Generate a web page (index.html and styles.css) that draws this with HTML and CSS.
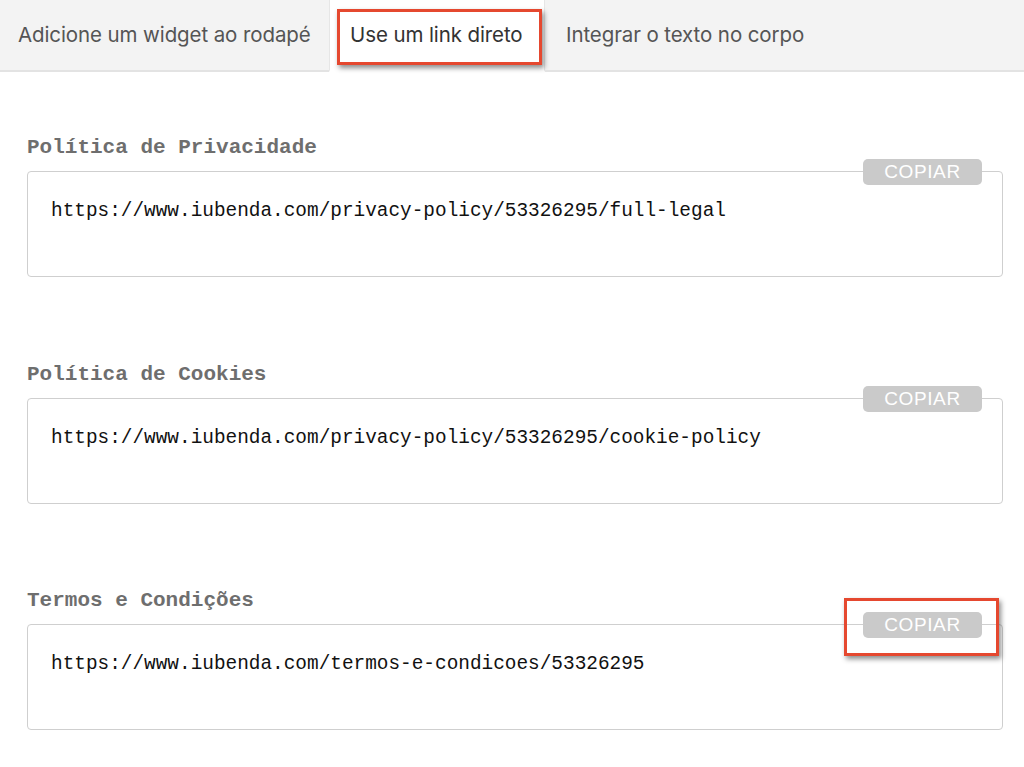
FILE: index.html
```html
<!DOCTYPE html>
<html lang="pt">
<head>
<meta charset="utf-8">
<link rel="stylesheet" href="styles.css">
</head>
<body>
<div class="tabs">
  <div class="tab tab-1">Adicione um widget ao rodapé</div>
  <div class="tab tab-2 active">Use um link direto<span class="highlight hl-tab"></span></div>
  <div class="tab tab-3">Integrar o texto no corpo</div>
</div>
<main class="content">
  <section class="section">
    <h2 class="label">Política de Privacidade</h2>
    <div class="box">
      <button class="copy">COPIAR</button>
      <div class="url">https://www.iubenda.com/privacy-policy/53326295/full-legal</div>
    </div>
  </section>
  <section class="section">
    <h2 class="label">Política de Cookies</h2>
    <div class="box">
      <button class="copy">COPIAR</button>
      <div class="url">https://www.iubenda.com/privacy-policy/53326295/cookie-policy</div>
    </div>
  </section>
  <section class="section">
    <h2 class="label">Termos e Condições</h2>
    <div class="box">
      <button class="copy">COPIAR<span class="highlight hl-btn"></span></button>
      <div class="url">https://www.iubenda.com/termos-e-condicoes/53326295</div>
    </div>
  </section>
</main>
</body>
</html>
```
FILE: styles.css
```css
* { box-sizing: border-box; }
html, body { margin: 0; padding: 0; background: #fff; }
body { width: 1024px; height: 767px; overflow: hidden; font-family: "Liberation Sans", Arial, sans-serif; }

.tabs {
  display: flex;
  height: 72px;
  background: #f3f3f3;
}
.tab {
  position: relative;
  display: flex;
  align-items: center;
  height: 72px;
  padding-bottom: 2px;
  font-family: "Inter", "Liberation Sans", sans-serif;
  font-size: 20.5px;
  letter-spacing: -0.1px;
  color: #555;
  border-bottom: 2px solid #e3e3e3;
  white-space: nowrap;
}
.tab-1 { width: 329px; padding-left: 18px; }
.tab-2 { width: 216px; padding-left: 21px; }
.tab-3 { flex: 1; padding-left: 21px; }
.tab.active {
  background: #fff;
  color: #333;
  border-bottom-color: #fff;
  border-left: 1px solid #e6e6e6;
  border-right: 1px solid #e6e6e6;
  padding-left: 20px;
}

.highlight {
  position: absolute;
  border: 3px solid #e5482f;
  box-shadow: 2px 3px 5px rgba(0,0,0,0.45);
  pointer-events: none;
}
.hl-tab { left: 7px; top: 9px; width: 205px; height: 56px; }
.hl-btn { left: -19px; top: -14px; width: 155px; height: 58px; }

.content { padding: 64px 21px 0 27px; }
.section { margin-bottom: 85.5px; }
.section:last-child { margin-bottom: 0; }
.label {
  margin: 0 0 11px;
  height: 24px;
  line-height: 24px;
  font-family: "Liberation Mono", "Courier New", monospace;
  font-weight: bold;
  font-size: 21px;
  color: #6e6e6e;
}
.box {
  position: relative;
  height: 106px;
  border: 1px solid #cfcfcf;
  border-radius: 4px;
  padding: 27px 0 0 23px;
}
.url {
  font-family: "Liberation Mono", "Courier New", monospace;
  font-size: 19.4px;
  line-height: 24px;
  color: #111;
  white-space: nowrap;
}
.copy {
  position: absolute;
  top: -13px;
  right: 20px;
  width: 119px;
  height: 26px;
  border: 0;
  border-radius: 5px;
  background: #cacaca;
  color: #fff;
  font-family: "Liberation Sans", Arial, sans-serif;
  font-size: 19px;
  line-height: 26px;
  letter-spacing: 0.6px;
  padding: 0;
  text-align: center;
}
```
